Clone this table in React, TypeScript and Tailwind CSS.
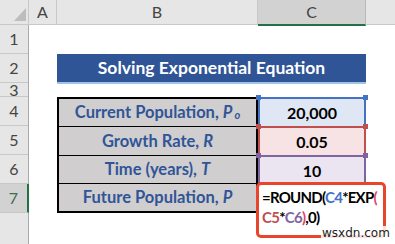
const ROW_HEADERS = [
  { n: "1", h: "h-[29px]" },
  { n: "2", h: "h-[29px]" },
  { n: "3", h: "h-[14px]" },
  { n: "4", h: "h-[29px]" },
  { n: "5", h: "h-[29px]" },
  { n: "6", h: "h-[29px]" },
  { n: "7", h: "h-[29px]", active: true },
];

const LABELS = [
  { text: "Current Population, ", v: "P", sub: "o" },
  { text: "Growth Rate, ", v: "R" },
  { text: "Time (years), ", v: "T" },
  { text: "Future Population, ", v: "P" },
];

const RANGES = [
  { value: "20,000", bg: "bg-[#dfe7f4]", border: "border-[#4472c4]", dot: "bg-[#4472c4]" },
  { value: "0.05", bg: "bg-[#f7e3e3]", border: "border-[#c0504d]", dot: "bg-[#c0504d]" },
  { value: "10", bg: "bg-[#ebe5f2]", border: "border-[#8064a2]", dot: "bg-[#8064a2]" },
];

export default function App() {
  return (
    <div className="relative w-[395px] h-[244px] overflow-hidden bg-white font-['Lato',sans-serif]">
      {/* Column headers */}
      <div className="flex h-[25px] bg-[#e6e6e6] border-b border-[#c8c8c8] text-[16px] text-[#444]">
        <div className="w-[29px] shrink-0 border-r border-[#c8c8c8] relative">
          <svg className="absolute left-[14px] top-[8px]" width="12" height="13" viewBox="0 0 12 13">
            <polygon points="12,0 12,13 0,13" fill="#bdbdbd" />
          </svg>
        </div>
        <div className="w-[28px] shrink-0 border-r border-[#c8c8c8] flex items-center justify-center">A</div>
        <div className="w-[201px] shrink-0 border-r border-[#c8c8c8] flex items-center justify-center">B</div>
        <div className="w-[108px] shrink-0 h-[26px] bg-[#d2d2d2] border-r border-[#b8b8b8] border-b-2 border-b-[#217346] flex items-center justify-center">
          C
        </div>
        <div className="flex-1" />
      </div>

      <div className="flex">
        {/* Row headers */}
        <div className="w-[29px] shrink-0 h-[219px] bg-[#e6e6e6] border-r border-[#ababab] flex flex-col text-[16px] text-[#444]">
          {ROW_HEADERS.map((r) => (
            <div
              key={r.n}
              className={`${r.h} shrink-0 border-b border-[#c8c8c8] flex items-center justify-center overflow-hidden leading-none ${
                r.active ? "bg-[#d2d2d2] text-[#3d6b52] border-r-2 border-r-[#217346] -mr-px" : ""
              }`}
            >
              {r.n}
            </div>
          ))}
        </div>

        {/* Sheet cells */}
        <div className="relative w-[366px] flex flex-col">
          <div className="h-[29px]" />
          <div className="h-[29px] flex">
            <div className="w-[28px]" />
            <div className="w-[309px] h-[30px] shrink-0 bg-[#2f5597] border-b-2 border-[#9dc3e6] flex items-center justify-center text-white font-bold text-[17.5px]">
              Solving Exponential Equation
            </div>
          </div>
          <div className="h-[14px]" />
          <div className="h-[116px] flex">
            <div className="w-[28px]" />
            <div className="w-[201px] shrink-0 border-2 border-black bg-[#d0cece] flex flex-col divide-y divide-black">
              {LABELS.map((l) => (
                <div key={l.text} className="flex-1 flex items-center justify-center text-[#2f5597] font-bold text-[16.5px]">
                  <span className="whitespace-pre">{l.text}</span>
                  <i>{l.v}</i>
                  {l.sub && <i className="text-[11px] ml-[2px] mt-[5px]">{l.sub}</i>}
                </div>
              ))}
            </div>
            <div className="w-[108px] shrink-0 flex flex-col">
              {RANGES.map((r) => (
                <div
                  key={r.value}
                  className={`relative h-[29px] shrink-0 ${r.bg} border-x-2 border-t-2 ${r.border} flex items-center justify-center font-bold text-[16px] text-black`}
                >
                  {r.value}
                  <span className={`absolute -left-[4px] -top-[4px] w-[5px] h-[5px] ${r.dot}`} />
                  <span className={`absolute -right-[4px] -top-[4px] w-[5px] h-[5px] ${r.dot}`} />
                </div>
              ))}
            </div>
          </div>

          {/* Formula being edited in C7 */}
          <div className="absolute left-[227px] top-[157px] w-[130px] h-[56px] bg-white border-[3px] border-[#e8452c] rounded-[5px] pl-[3px] pt-[2px] font-bold text-[15px] tracking-[-0.75px] leading-[20px] text-black">
            <div>
              =ROUND(<span className="text-[#4472c4]">C4</span>*EXP<span className="text-[#e0446a]">(</span>
            </div>
            <div>
              <span className="text-[#c0504d]">C5</span>*<span className="text-[#8064a2]">C6</span>
              <span className="text-[#e0446a]">)</span>,0)
            </div>
          </div>
        </div>
      </div>

      {/* Watermark */}
      <div className="absolute left-[321px] top-[226px] px-[1px] bg-white/85 text-[12px] leading-[14px] text-[#222] font-['DejaVu_Sans',sans-serif]">
        wsxdn.com
      </div>
    </div>
  );
}
